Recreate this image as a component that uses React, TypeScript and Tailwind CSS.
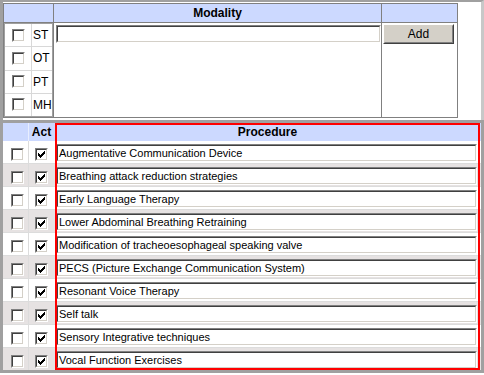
import React from "react";

const PROCS = [
  "Augmentative Communication Device",
  "Breathing attack reduction strategies",
  "Early Language Therapy",
  "Lower Abdominal Breathing Retraining",
  "Modification of tracheoesophageal speaking valve",
  "PECS (Picture Exchange Communication System)",
  "Resonant Voice Therapy",
  "Self talk",
  "Sensory Integrative techniques",
  "Vocal Function Exercises",
];

const CHECK_COLS: [number, number][] = [
  [2, 3],
  [3, 3],
  [4, 3],
  [3, 3],
  [2, 3],
  [1, 3],
  [0, 3],
];

function Check({ checked = false }: { checked?: boolean }) {
  return (
    <span className="block w-[13px] h-[13px] border border-t-[#808080] border-l-[#808080] border-b-white border-r-white">
      <span className="relative block w-[11px] h-[11px] bg-white border border-t-[#404040] border-l-[#404040] border-b-[#d4d0c8] border-r-[#d4d0c8]">
        {checked && (
          <svg
            className="absolute left-0 top-0"
            width="9"
            height="9"
            viewBox="0 0 9 9"
            shapeRendering="crispEdges"
          >
            {CHECK_COLS.map(([y, h], i) => (
              <rect key={i} x={1 + i} y={1 + y} width={1} height={h} fill="#000" />
            ))}
          </svg>
        )}
      </span>
    </span>
  );
}

function Inset({ className, children }: { className: string; children?: React.ReactNode }) {
  return (
    <div className={"border border-t-[#808080] border-l-[#808080] border-b-white border-r-white " + className}>
      <div className="h-full w-full bg-white border border-t-[#404040] border-l-[#404040] border-b-[#d4d0c8] border-r-[#d4d0c8] flex items-center pl-[1px] overflow-hidden whitespace-nowrap text-[11px]">
        {children}
      </div>
    </div>
  );
}

export default function App() {
  const font = { fontFamily: '"Liberation Sans", Arial, sans-serif' };
  return (
    <div className="w-[484px] h-[375px] bg-white text-[12px] text-black overflow-hidden" style={font}>
      {/* Top section */}
      <div className="h-[120px] border-t-2 border-l-[3px] border-r-[3px] border-t-[#a0a0a0] border-l-[#a0a0a0] border-r-[#c8c8c8] pt-[1px]">
        <div className="w-[455px] h-[115px] border border-[#808080] flex flex-col">
          <div className="h-[19px] flex bg-[#ccd9ff] border-b border-[#808080]">
            <div className="w-[50px] border-r border-[#808080]" />
            <div className="w-[328px] border-r border-[#808080] flex items-center justify-center font-bold">
              Modality
            </div>
            <div className="flex-1" />
          </div>
          <div className="flex-1 flex">
            <div className="w-[50px] border-r border-[#808080] flex flex-col">
              <div className="h-[94px] border border-[#a0a0a0] flex flex-col">
                {["ST", "OT", "PT", "MH"].map((l, i) => (
                  <div
                    key={l}
                    className={"flex-1 flex " + (i < 3 ? "border-b border-[#d8d8d8]" : "")}
                  >
                    <div className="w-[27px] border-r border-[#d8d8d8] flex items-center justify-center">
                      <Check />
                    </div>
                    <div className="flex-1 flex items-center pl-[1px]">{l}</div>
                  </div>
                ))}
              </div>
            </div>
            <div className="w-[328px] border-r border-[#808080] pt-[2px] pl-[2px]">
              <Inset className="w-[325px] h-[18px]" />
            </div>
            <div className="flex-1 pt-[1px] pl-[1px]">
              <button className="w-[71px] h-[20px] bg-[#d4d0c8] border border-t-white border-l-white border-b-[#404040] border-r-[#404040]">
                <span className="flex h-full w-full items-center justify-center border border-t-[#d4d0c8] border-l-[#d4d0c8] border-b-[#808080] border-r-[#808080]">
                  Add
                </span>
              </button>
            </div>
          </div>
        </div>
      </div>

      {/* Bottom section */}
      <div className="relative h-[253px] border-[3px] border-[#a0a0a0] overflow-hidden">
        <div className="h-[18px] flex bg-[#ccd9ff]">
          <div className="w-[26px] border-r border-[#e8eeff]" />
          <div className="w-[25px] flex items-center justify-center font-bold">Act</div>
          <div className="flex-1 flex items-center justify-center font-bold">Procedure</div>
        </div>
        {PROCS.map((p, i) => (
          <div
            key={p}
            className={
              "h-[23px] flex border-b border-[#dcdcdc] " + (i % 2 === 1 ? "bg-[#e6e2e2]" : "bg-white")
            }
          >
            <div className="w-[26px] border-r border-[#dcdcdc] pt-[7px] pl-[8px]">
              <Check />
            </div>
            <div className="w-[25px] pt-[7px] pl-[6px]">
              <Check checked />
            </div>
            <div className="flex-1 pt-[3px] pl-[2px]">
              <Inset className="w-[421px] h-[18px]">{p}</Inset>
            </div>
          </div>
        ))}
        <div className="absolute left-[52px] top-0 w-[425px] h-[247px] border-2 border-[#ff0000] pointer-events-none" />
      </div>
    </div>
  );
}
